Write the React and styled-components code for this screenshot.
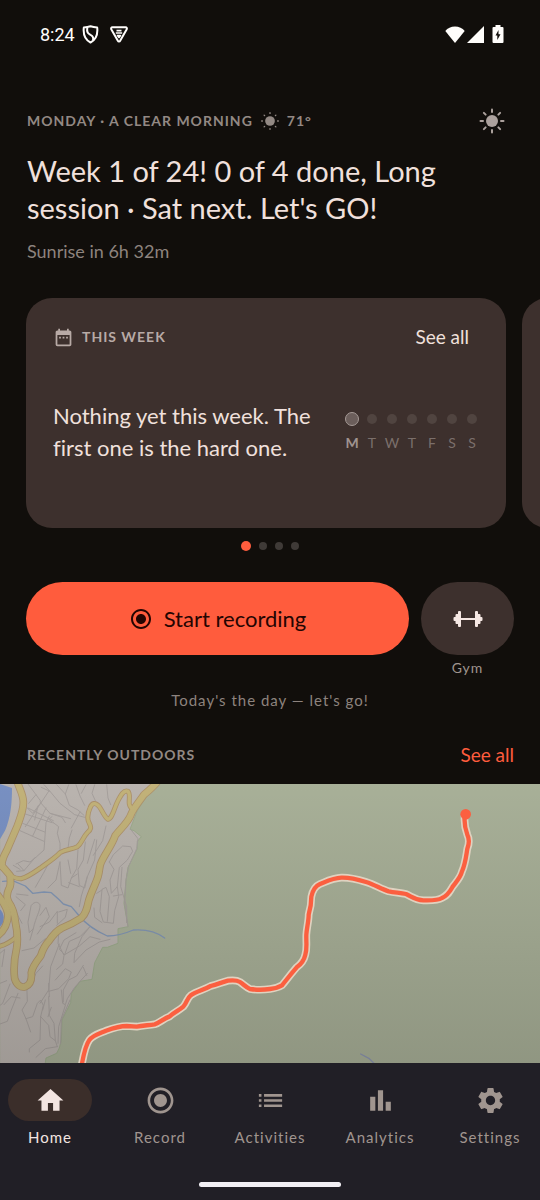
import styled, { createGlobalStyle } from "styled-components";
import {
  MdBarChart,
  MdDateRange,
  MdHome,
  MdList,
  MdRadioButtonChecked,
  MdSettings,
} from "react-icons/md";

const GlobalStyle = createGlobalStyle`
  *, *::before {
    box-sizing: border-box;
  }
  body {
    margin: 0;
    background-color: #110e0b;
  }
  button {
    font-family: inherit;
    border: none;
    padding: 0;
    cursor: pointer;
  }
`

const Screen = styled.div`
  min-height: 100vh;
  display: flex;
  flex-direction: column;
  background-color: #110e0b;
  color: #f0e0dc;
  font-family: Lato, sans-serif;
  font-variant-ligatures: none;
`

const StatusBar = styled.div`
  height: 68px;
  padding: 0 36px 0 40px;
  display: flex;
  align-items: center;
  justify-content: space-between;
  color: #fffdfb;
  font-family: Roboto, sans-serif;
  font-size: 18px;
`

const StatusGroup = styled.div`
  display: flex;
  align-items: center;
  gap: ${props => props.$gap}px;
  svg {
    display: block;
  }
`

const Header = styled.header`
  padding: 31px 26px 0 27px;
`

const Greeting = styled.div`
  height: 44px;
  display: flex;
  align-items: center;
  justify-content: space-between;
`

const Label = styled.h2`
  margin: 0;
  display: flex;
  align-items: center;
  gap: 8px;
  font-size: 14px;
  line-height: 20px;
  font-weight: 700;
  letter-spacing: 1px;
  color: ${props => props.$color || "#938984"};
`

const IconButton = styled.button`
  width: 44px;
  height: 44px;
  display: flex;
  align-items: center;
  justify-content: center;
  background: none;
  color: #aca19d;
`

const Title = styled.h1`
  margin: 9px 0 0;
  font-size: 29px;
  line-height: 37px;
  font-weight: 400;
`

const Sunrise = styled.p`
  margin: 12px 0 0;
  font-size: 18px;
  line-height: 26px;
  color: #8d837e;
`

const Carousel = styled.div`
  margin-top: 34px;
  padding-left: 26px;
  display: flex;
  gap: 16px;
  overflow: hidden;
`

const Card = styled.section`
  flex: 0 0 calc(100% - 34px);
  min-height: 230px;
  padding: 18px 24px 22px 27px;
  display: flex;
  flex-direction: column;
  border-radius: 26px;
  background-color: #3d302d;
`

const CardHead = styled.div`
  height: 42px;
  display: flex;
  align-items: center;
  justify-content: space-between;
`

const CardBody = styled.div`
  flex: 1;
  display: flex;
  align-items: center;
  justify-content: space-between;
`

const CardText = styled.p`
  margin: 0;
  width: 280px;
  font-size: 22px;
  line-height: 32px;
`

const TextButton = styled.button`
  height: 24px;
  padding: 0 ${props => props.$pad || 0}px;
  background: none;
  color: ${props => props.$color};
  font-size: 19px;
  line-height: 24px;
`

const Week = styled.ol`
  margin: 0;
  padding: 0;
  display: flex;
  list-style: none;
`

const Day = styled.li`
  width: 20px;
  display: flex;
  flex-direction: column;
  align-items: center;
  gap: 8px;
  font-size: 14px;
  line-height: 18px;
  font-weight: ${props => (props.$today ? 700 : 400)};
  color: ${props => (props.$today ? "#a0938f" : "#7b6f6b")};
  &::before {
    content: "";
    width: ${props => (props.$today ? 14 : 10)}px;
    height: ${props => (props.$today ? 14 : 10)}px;
    margin: ${props => (props.$today ? 0 : 2)}px 0;
    border-radius: 50%;
    border: ${props => (props.$today ? "1px solid #a59a96" : "none")};
    background-color: ${props => (props.$today ? "#6b5e5b" : "#504440")};
  }
`

const Pager = styled.div`
  margin-top: 13px;
  display: flex;
  align-items: center;
  justify-content: center;
  gap: 8px;
  height: 10px;
`

const PagerDot = styled.button`
  width: ${props => (props.$active ? 10 : 8)}px;
  height: ${props => (props.$active ? 10 : 8)}px;
  border-radius: 50%;
  background-color: ${props => (props.$active ? "#ff5d3e" : "#3f3a37")};
`

const Actions = styled.div`
  margin-top: 31px;
  padding: 0 26px;
  display: grid;
  grid-template-columns: 1fr 93px;
  column-gap: 12px;
`

const StartButton = styled.button`
  height: 73px;
  border-radius: 37px;
  display: flex;
  align-items: center;
  justify-content: center;
  gap: 11px;
  background-color: #ff5c3d;
  color: #240502;
  font-size: 22px;
`

const Gym = styled.div`
  display: flex;
  flex-direction: column;
  align-items: center;
  gap: 3px;
  font-size: 14px;
  line-height: 20px;
  letter-spacing: 1px;
  color: #a0958f;
`

const GymButton = styled.button`
  width: 100%;
  height: 73px;
  border-radius: 37px;
  display: flex;
  align-items: center;
  justify-content: center;
  background-color: #3d302d;
  color: #f6e8e4;
`

const Hint = styled.p`
  margin: 10px 0 0;
  text-align: center;
  font-size: 15px;
  line-height: 24px;
  letter-spacing: 1px;
  color: #8d837e;
`

const SectionHead = styled.div`
  margin: 31px 0 17px;
  padding: 0 26px 0 27px;
  display: flex;
  align-items: center;
  justify-content: space-between;
`

const MapView = styled.div`
  flex: 1 1 0;
  min-height: 240px;
  display: flex;
  background-color: #99a189;
  svg {
    flex: 1;
    width: 100%;
    height: auto;
    min-height: 0;
  }
`

const Nav = styled.nav`
  height: 137px;
  padding: 16px 0 13px;
  display: flex;
  flex-direction: column;
  align-items: center;
  justify-content: space-between;
  background-color: #211f26;
`

const Tabs = styled.div`
  width: 100%;
  display: grid;
  grid-template-columns: repeat(5, 1fr);
  column-gap: 10px;
`

const Tab = styled.a`
  display: flex;
  flex-direction: column;
  align-items: center;
  gap: 6px;
  font-size: 15px;
  line-height: 20px;
  letter-spacing: 1px;
  text-decoration: none;
  color: ${props => (props.$active ? "#f3e5e1" : "#a0958f")};
`

const TabIcon = styled.span`
  width: 84px;
  height: 42px;
  border-radius: 21px;
  display: flex;
  align-items: center;
  justify-content: center;
  background-color: ${props => (props.$active ? "#3b2e2a" : "transparent")};
`

const HomeBar = styled.div`
  width: 142px;
  height: 5px;
  border-radius: 3px;
  background-color: #f2eff4;
`

const days = ["M", "T", "W", "T", "F", "S", "S"];

const tabs = [
  { name: "Home", icon: MdHome },
  { name: "Record", icon: MdRadioButtonChecked },
  { name: "Activities", icon: MdList },
  { name: "Analytics", icon: MdBarChart },
  { name: "Settings", icon: MdSettings },
];

function Sun({ size, core, from, to, stroke }) {
  return (
    <svg width={size} height={size} viewBox="-13 -13 26 26" aria-hidden="true">
      <circle r={core} fill="currentColor" />
      {[0, 45, 90, 135, 180, 225, 270, 315].map(a => (
        <path key={a} d={`M0 ${from}V${to}`} transform={`rotate(${a})`} stroke="currentColor" strokeWidth={stroke} strokeLinecap="round" />
      ))}
    </svg>
  )
}

function Dumbbell() {
  return (
    <svg width="30" height="18" viewBox="0 0 30 18" fill="currentColor" aria-hidden="true">
      <path d="M8 8h14v2H8z" />
      <rect x="5" y="1" width="3" height="16" rx="1" />
      <rect x="2.500" y="4" width="4" height="10" rx="1" />
      <rect x="0.500" y="7" width="4" height="4" rx="1" />
      <rect x="22" y="1" width="3" height="16" rx="1" />
      <rect x="23.500" y="4" width="4" height="10" rx="1" />
      <rect x="25.500" y="7" width="4" height="4" rx="1" />
    </svg>
  )
}

// main roads, drawn twice: casing, then fill
const wideRoads = [
  "M52 6C60 30 70 45 70 66C71 90 62 110 52 138L20 212C8 234 4 244 6 258L30 286C32 306 34 318 26 328C20 342 18 352 26 366C40 386 44 404 46 426C54 462 54 480 50 504C44 530 40 566 44 596C50 616 64 624 76 620C92 614 96 600 94 578C96 562 108 546 122 528C128 510 136 494 146 484C158 466 170 452 186 444C206 436 222 428 244 414C258 402 262 382 266 362C276 330 288 310 294 290C300 268 298 256 304 246C318 216 336 196 346 166C366 142 384 126 392 106C400 84 420 62 432 44C444 34 456 24 470 8",
  "M-6 346C8 364 20 380 24 402C24 428 16 450 -8 468",
];
const smallRoads = [
  "M4 262C24 284 42 298 64 296C90 288 106 274 124 262C146 246 168 232 180 218C198 208 216 208 232 200C246 190 248 172 262 158C274 148 274 142 268 130C260 116 262 102 270 84C276 68 286 66 298 80C308 94 314 112 324 118C336 116 342 88 352 66C362 46 372 28 384 34C392 42 386 60 388 72C390 82 394 86 402 90",
  "M-6 500C14 496 34 484 50 470",
];

const streets =
  "M84 12L108 44L124 66L98 100L82 84M108 44L86 70M146 34L114 82L76 140M120 66L150 100L186 112L196 128M124 22L150 34L180 70L224 104L254 112M150 34L132 14M150 100L212 116M84 84L160 122M76 102L156 128M68 130L134 156M60 152L132 184M138 84L98 168M114 78L104 120M148 108L138 128L132 210L110 230L90 246L70 242L48 252M156 110L146 118L160 128M160 128L176 140L172 160L180 190L180 216" +
  "M54 252L72 272L106 232M72 272L50 274M40 256L60 268M170 14L196 42L208 76L234 90L252 106M196 42L206 14M228 14L240 48L254 76M258 14L244 40M284 14L276 40L286 62M320 14L324 54L332 74M216 150L208 174L204 206M240 96L214 144" +
  "M106 322L130 280L144 254M144 324L168 300L180 246M180 246L184 316L204 324L214 294L230 266L234 210M214 294L232 282M204 240L212 280M256 186L250 240L234 268L238 316L254 324L262 290L284 240L290 180M284 178L274 210L262 250M318 138L308 182L280 226M262 290L244 348L238 380M238 320L206 308" +
  "M328 246L340 224L368 198L392 200L398 214L382 240L358 262L352 320L334 340L330 300L342 268L328 246M366 262L362 320L380 380L380 428M352 320L356 350L344 392L340 430L310 426L300 394L306 328L318 322L328 350L322 424M306 330L290 340M282 384L284 412L306 428M340 348L366 344M392 148L414 176L410 206L386 260L378 300L374 370L384 440" +
  "M50 342L84 346M48 350L76 374L62 392M94 376C104 362 118 366 120 376C120 396 108 408 100 446L88 458L84 428Z M120 406L138 382L148 410L112 462M120 440L148 426L172 394L172 430M100 446L90 480M66 512L102 504L136 476M176 396L202 388L196 412L170 436M50 400L66 430" +
  "M270 440L240 470L208 484L194 524L178 508L192 480L228 458M176 460L174 490L192 526L188 552L170 568M194 524L238 498L270 470L300 478M270 440L246 470L224 520L222 548L258 510L298 486L330 478M178 492L152 560L146 630L120 670M128 558L108 580L94 610M166 600L196 566L214 576L206 596L176 626L146 634M146 610L148 650M250 556L230 588L206 600L190 630L190 666M262 580L224 622L202 656L196 674L188 670L184 630M250 562L260 586" +
  "M0 610L20 602M54 640L34 690L22 724L0 732M30 612L8 670L0 676M60 654L34 650L12 674M78 716L66 690L82 664L80 608M78 716L98 710L112 670L122 660L130 676L122 710M78 716L92 756M122 710L120 780L88 806L88 816M122 710L146 736L150 770L166 782L162 730L148 706L146 650M166 782L172 800M108 832L136 806L172 800M136 660L128 690M154 682L144 710M0 520L14 508L6 560M196 676L176 740L174 790M210 660L184 720L182 792";

function TrailMap() {
  const route =
    "M244 862C250 826 256 796 268 780C280 764 300 760 318 752C340 744 358 738 380 738L410 740C430 736 446 736 464 733C480 728 490 716 508 710C524 696 536 692 550 680C562 666 560 656 572 646C590 634 610 630 632 618C654 612 668 606 684 602C700 600 710 600 720 606C732 614 738 622 750 627C770 630 790 630 810 627C826 625 836 622 846 616C856 604 866 590 890 562C904 552 912 542 916 524C922 504 918 486 919 464C920 444 926 424 926 404C932 384 934 366 934 350C938 330 946 318 960 312C980 304 1000 294 1024 293C1050 292 1072 298 1098 306C1124 314 1142 326 1166 334C1186 338 1200 338 1218 342C1236 350 1244 360 1270 361C1300 362 1316 360 1326 354C1344 346 1350 334 1358 320C1370 304 1382 292 1386 274C1396 252 1398 230 1402 206C1408 190 1408 176 1402 164C1396 148 1392 130 1394 108";
  return (
    <svg viewBox="0 12 1620 837" preserveAspectRatio="xMidYMin slice" role="img" aria-label="Route of the last outdoor activity" fill="none" strokeLinejoin="round" strokeLinecap="round">
      <defs>
        <linearGradient id="shade" x1="0" y1="0" x2="0" y2="1">
          <stop offset="0" stopColor="#110e0b" stopOpacity="0" />
          <stop offset="1" stopColor="#110e0b" stopOpacity="0.16" />
        </linearGradient>
      </defs>
      <path d="M0 0H1620V860H0z" fill="#a8b098" />
      <path
        d="M0 0H478C456 30 432 58 412 92L390 148L402 152L424 170L412 184L412 206L384 262L378 300L372 370L384 440L354 446L354 490L322 502L308 502L284 548L276 598L240 604L214 640L212 668L186 720L184 780L178 804L170 820L138 834L134 860H0z"
        fill="#bab4af"
        stroke="#9cab8c"
        strokeWidth="3"
      />
      <path d="M0 12L36 24C36 70 32 110 16 150L0 178z" fill="#7890c2" />
      <path d="M0 388C12 400 14 416 8 430L0 440z" fill="#7890c2" />
      <path d={streets} stroke="#a6a09d" strokeWidth="3" />
      <path d="M8 304L38 302L76 318L98 340L132 336L154 338L176 358L190 372L214 380L238 408C256 430 290 454 322 468C350 468 372 462 400 450C430 448 468 454 494 474" stroke="#8296b4" strokeWidth="4" />
      <path d="M1082 822L1108 836L1126 854" stroke="#8a93b0" strokeWidth="4" />
      {smallRoads.map(d => <path key={d} d={d} stroke="#ae936c" strokeWidth="15" />)}
      {wideRoads.map(d => <path key={d} d={d} stroke="#ae936c" strokeWidth="23" />)}
      {smallRoads.map(d => <path key={d} d={d} stroke="#c2b279" strokeWidth="10" />)}
      {wideRoads.map(d => <path key={d} d={d} stroke="#c2b279" strokeWidth="18" />)}
      <path d="M0 0H1620V860H0z" fill="url(#shade)" />
      <path d={route} stroke="#dfd2c0" strokeWidth="23" />
      <path d={route} stroke="#fb5f40" strokeWidth="13" />
      <circle cx="1397" cy="103" r="16" fill="#fb5f40" />
    </svg>
  )
}

function App() {
  return (
    <>
      <GlobalStyle />
      <Screen>
        <StatusBar>
          <StatusGroup $gap={7}>
            <span>8:24</span>
            <StatusGroup $gap={11}>
              <svg width="17" height="19" viewBox="0 0 17 19" fill="none" stroke="currentColor" strokeWidth="2" strokeLinejoin="round">
                <path d="M8.500 1.300C6.500 2 4 2.400 1.800 2.500C1.200 8 1.500 14 8.500 17.500C15.500 14 15.800 8 15.200 2.500C13 2.400 10.500 2 8.500 1.300Z" />
                <path d="M5.300 2.500C4.500 7.500 6 8.500 8.500 9.800C11 11 11.800 12.500 11 15.500" />
              </svg>
              <svg width="18" height="17" viewBox="0 0 18 17" fill="none" stroke="currentColor" strokeWidth="2" strokeLinejoin="round">
                <path d="M2.500 1.300H15.500C16.800 1.300 17.200 2.300 16.600 3.500L10.300 14.600C9.600 15.900 8.400 15.900 7.700 14.600L1.400 3.500C.8 2.300 1.200 1.300 2.500 1.300Z" />
                <path d="M6.500 4.600H11.500M5.800 7H12.200M7.500 9.500H10.500L9 11.500Z" strokeWidth="1.600" />
              </svg>
            </StatusGroup>
          </StatusGroup>
          <StatusGroup $gap={8}>
            <StatusGroup $gap={2}>
              <svg width="20" height="17" viewBox="0 0 20 17" fill="currentColor">
                <path d="M10 .5C6 .5 2.600 2.200.3 5L10 17L19.700 5C17.400 2.200 14 .5 10 .5Z" />
              </svg>
              <svg width="17" height="17" viewBox="0 0 17 17" fill="currentColor">
                <path d="M17 0V17H0Z" />
              </svg>
            </StatusGroup>
            <svg width="12" height="18" viewBox="0 0 12 18" fill="currentColor" fillRule="evenodd">
              <path d="M3.500 0H8.500V2H10.500Q11.500 2 11.500 3V17Q11.500 18 10.500 18H1.500Q.5 18 .5 17V3Q.5 2 1.500 2H3.500ZM6.500 5L3.500 10.500H5.300V15L8.500 9.200H6.500Z" />
            </svg>
          </StatusGroup>
        </StatusBar>

        <Header>
          <Greeting>
            <Label>
              MONDAY · A CLEAR MORNING
              <Sun size={18} core={7} from={11} to={12} stroke={2} />
              71°
            </Label>
            <IconButton aria-label="Theme">
              <Sun size={26} core={6} from={9} to={11.5} stroke={2} />
            </IconButton>
          </Greeting>
          <Title>Week 1 of 24! 0 of 4 done, Long session · Sat next. Let's GO!</Title>
          <Sunrise>Sunrise in 6h 32m</Sunrise>
        </Header>

        <Carousel>
          <Card>
            <CardHead>
              <Label $color="#b8aaa6">
                <MdDateRange size={21} />
                THIS WEEK
              </Label>
              <TextButton $color="#f0e0dc" $pad={13}>See all</TextButton>
            </CardHead>
            <CardBody>
              <CardText>Nothing yet this week. The first one is the hard one.</CardText>
              <Week>
                {days.map((day, i) => (
                  <Day key={i} $today={i === 0}>{day}</Day>
                ))}
              </Week>
            </CardBody>
          </Card>
          <Card />
        </Carousel>
        <Pager>
          {[0, 1, 2, 3].map(i => (
            <PagerDot key={i} $active={i === 0} aria-label={`Card ${i + 1}`} />
          ))}
        </Pager>

        <Actions>
          <StartButton>
            <MdRadioButtonChecked size={24} />
            Start recording
          </StartButton>
          <Gym>
            <GymButton aria-labelledby="gym-label">
              <Dumbbell />
            </GymButton>
            <span id="gym-label">Gym</span>
          </Gym>
        </Actions>
        <Hint>Today's the day — let's go!</Hint>

        <SectionHead>
          <Label>RECENTLY OUTDOORS</Label>
          <TextButton $color="#ff5c3d">See all</TextButton>
        </SectionHead>
        <MapView>
          <TrailMap />
        </MapView>

        <Nav>
          <Tabs>
            {tabs.map(({ name, icon: TabGlyph }, i) => (
              <Tab key={name} href={`#${name.toLowerCase()}`} $active={i === 0}>
                <TabIcon $active={i === 0}>
                  <TabGlyph size={31} />
                </TabIcon>
                {name}
              </Tab>
            ))}
          </Tabs>
          <HomeBar />
        </Nav>
      </Screen>
    </>
  )
}

export default App;
